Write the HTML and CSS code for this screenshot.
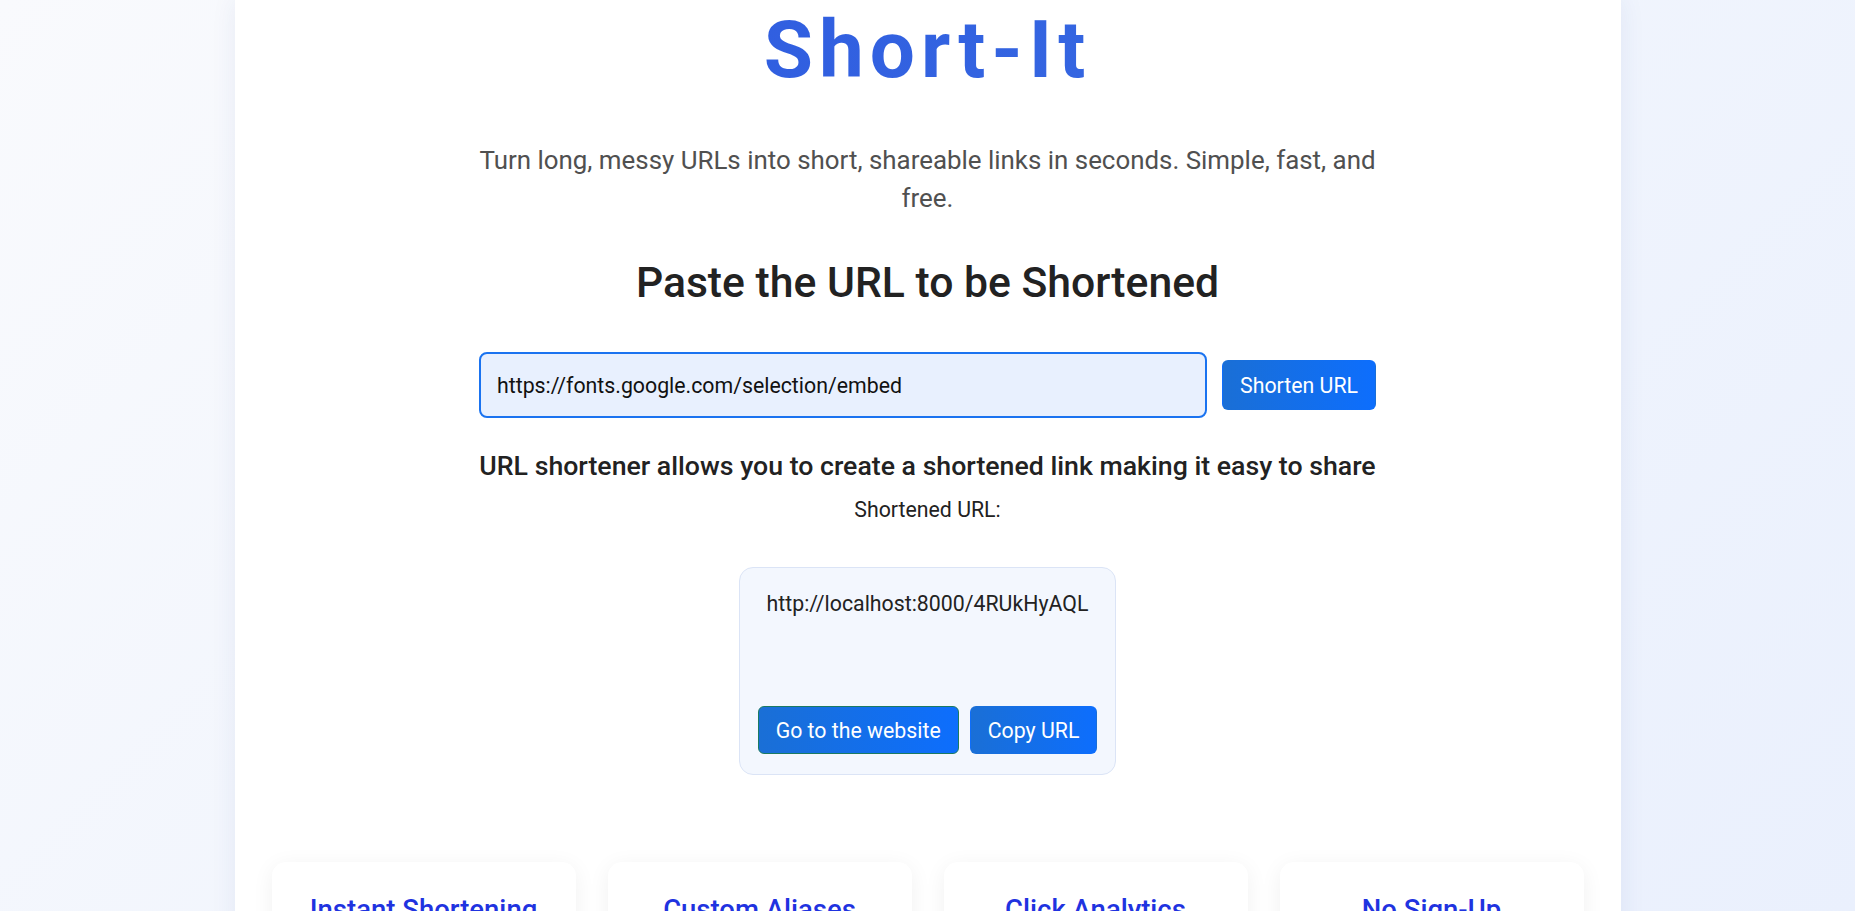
FILE: index.html
```html
<!DOCTYPE html>
<html lang="en">
<head>
<meta charset="utf-8">
<title>Short-It</title>
<link rel="stylesheet" href="styles.css">
</head>
<body>
<div class="page">
  <main class="container">
    <h1 class="brand">Short-It</h1>
    <div class="column">
      <p class="lead">Turn long, messy URLs into short, shareable links in seconds. Simple, fast, and free.</p>
      <h2 class="paste-title">Paste the URL to be Shortened</h2>
      <form class="url-form" onsubmit="return false;">
        <input class="url-input" type="text" value="https://fonts.google.com/selection/embed">
        <button class="btn btn-shorten" type="submit">Shorten URL</button>
      </form>
      <h3 class="explain">URL shortener allows you to create a shortened link making it easy to share</h3>
      <p class="label">Shortened URL:</p>
      <div class="result">
        <p class="result-url">http://localhost:8000/4RUkHyAQL</p>
        <div class="result-actions">
          <button class="btn btn-go" type="button">Go to the website</button>
          <button class="btn btn-copy" type="button">Copy URL</button>
        </div>
      </div>
    </div>
    <section class="features">
      <div class="feature"><h4 class="feature-title">Instant Shortening</h4></div>
      <div class="feature"><h4 class="feature-title">Custom Aliases</h4></div>
      <div class="feature"><h4 class="feature-title">Click Analytics</h4></div>
      <div class="feature"><h4 class="feature-title">No Sign-Up</h4></div>
    </section>
  </main>
</div>
</body>
</html>
```

FILE: styles.css
```css
* { box-sizing: border-box; }

html, body {
  margin: 0;
  padding: 0;
  height: 100%;
  overflow: hidden;
}

body {
  font-family: Roboto, "Liberation Sans", Arial, sans-serif;
  background: linear-gradient(135deg, #f9fafd 0%, #f1f5fd 50%, #eaf0fd 100%);
  color: #222;
}

.page {
  min-height: 100%;
  display: flex;
  justify-content: center;
}

.container {
  width: 1386px;
  min-height: 100vh;
  background: #ffffff;
  box-shadow: 0 0 24px rgba(40, 60, 140, 0.08);
  padding: 2px 37px 40px;
  text-align: center;
}

.brand {
  margin: 0;
  font-size: 80px;
  line-height: 96px;
  font-weight: 700;
  letter-spacing: 6px;
  background: linear-gradient(90deg, #2b55df 0%, #3a6fe2 100%);
  -webkit-background-clip: text;
  background-clip: text;
  color: transparent;
}

.column {
  width: 900px;
  margin: 0 auto;
  display: flex;
  flex-direction: column;
  align-items: center;
}

.lead {
  margin: 43px 0 0;
  font-size: 25.9px;
  line-height: 38px;
  color: #505050;
}

.paste-title {
  margin: 41px 0 0;
  font-size: 42.7px;
  line-height: 48px;
  font-weight: 500;
  color: #222;
}

.url-form {
  margin-top: 46px;
  width: 897px;
  display: flex;
  align-items: center;
  gap: 15px;
}

.url-input {
  flex: 1;
  min-width: 0;
  height: 66px;
  border: 2px solid #1a73f0;
  border-radius: 8px;
  background: #e8f0fe;
  padding: 0 16px;
  font-family: inherit;
  font-size: 21.3px;
  color: #111;
  outline: none;
}

.btn {
  flex-shrink: 0;
  white-space: nowrap;
  border: 1px solid transparent;
  border-radius: 6px;
  background: linear-gradient(90deg, #1a6fd6 0%, #0d6efd 100%);
  color: #fff;
  font-family: inherit;
  font-size: 21.3px;
  line-height: 25px;
  cursor: pointer;
}

.btn-shorten {
  height: 50px;
  padding: 0 17px;
}

.explain {
  margin: 32px 0 0;
  font-size: 26.7px;
  line-height: 32px;
  font-weight: 500;
  white-space: nowrap;
  color: #222;
}

.label {
  margin: 14px 0 0;
  font-size: 21.3px;
  line-height: 28px;
  color: #222;
}

.result {
  margin-top: 43px;
  width: 377px;
  height: 208px;
  background: #f3f7fe;
  border: 1px solid #dbe4f6;
  border-radius: 14px;
  padding: 23px 10px 20px;
  display: flex;
  flex-direction: column;
  align-items: center;
  justify-content: space-between;
}

.result-url {
  margin: 0;
  font-size: 21.3px;
  line-height: 26px;
  color: #222;
}

.result-actions {
  display: flex;
  gap: 11px;
}

.btn-go,
.btn-copy {
  height: 48px;
  padding: 0 17px;
}

.btn-go {
  border-color: #1b7a62;
}

.features {
  margin-top: 87px;
  display: grid;
  grid-template-columns: repeat(4, 1fr);
  gap: 32px;
}

.feature {
  background: #fff;
  border-radius: 14px;
  box-shadow: 0 4px 22px rgba(0, 0, 0, 0.06);
  padding: 30px 20px 40px;
  min-height: 160px;
}

.feature-title {
  margin: 0;
  font-size: 27.5px;
  line-height: 36px;
  font-weight: 500;
  color: #1f33e0;
}
```
